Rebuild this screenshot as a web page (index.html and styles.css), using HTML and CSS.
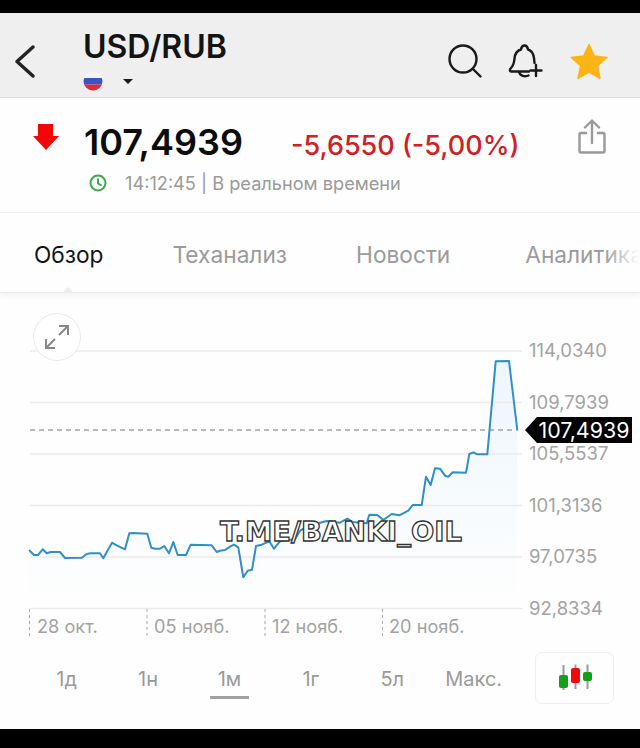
FILE: index.html
```html
<!DOCTYPE html>
<html>
<head>
	<title>USD/RUB</title>
	<link rel="stylesheet" href="styles.css">
</head>
<body>
	<div class="phone-bar top"></div>

	<header class="header">
		<svg class="back" width="20" height="34" viewBox="0 0 20 34"><path d="M18 2 L2 16.500 L18 31" /></svg>
		<div class="pair">
			<div class="pair-name">USD/RUB</div>
			<div class="pair-flag">
				<svg width="20" height="20" viewBox="0 0 20 20">
					<clipPath id="flagclip"><circle cx="10" cy="10" r="9.500" /></clipPath>
					<g clip-path="url(#flagclip)">
						<rect width="20" height="7" fill="#f4f4f6" />
						<rect y="7" width="20" height="6.500" fill="#3a56c4" />
						<rect y="13.500" width="20" height="6.500" fill="#dd2b3a" />
					</g>
				</svg>
				<span class="caret"></span>
			</div>
		</div>
		<div class="header-icons">
			<svg class="icon-search" width="36" height="36" viewBox="0 0 36 36"><circle cx="15" cy="15" r="13.500" /><path d="M25 25 L32.500 32.500" /></svg>
			<svg class="icon-bell" width="36" height="36" viewBox="0 0 36 36"><path d="M21 27.500 C14 27.500 8 27.500 3 27.500 C1.500 27 1.500 25.500 3 24 C6 21 6 19 6.500 14.500 C7 9.500 9.500 6.500 13 5.500 C13.500 2.500 15 1.500 16.500 1.500 C18 1.500 19.500 2.500 20 5.500 C23.500 6.500 25.500 9.500 26 14 L26.500 19" /><path d="M11 28 C12 32 17 33 20.500 31.500" /><path d="M28 21 V32 M22.500 26.500 H33.500" /></svg>
			<svg class="icon-star" width="38" height="38" viewBox="0 0 38 38"><path class="star" d="M19 1.500 L24.300 13 L36.800 14.400 L27.500 22.800 L30 35.300 L19 29 L8 35.300 L10.500 22.800 L1.200 14.400 L13.700 13 Z" /></svg>
		</div>
	</header>

	<section class="quote">
		<svg class="down-arrow" width="26" height="26" viewBox="0 0 26 26"><path d="M5 0 H20 V12 H26 L13 26 L0 12 H5 Z" /></svg>
		<div class="quote-main">
			<div class="quote-prices">
				<span class="price">107,4939</span>
				<span class="change">-5,6550 (-5,00%)</span>
			</div>
			<div class="quote-time">
				<svg width="18" height="18" viewBox="0 0 18 18"><circle cx="9" cy="9" r="7.500" /><path d="M9 4.500 V9.500 L12.500 11.500" /></svg>
				<span>14:12:45 | В реальном времени</span>
			</div>
		</div>
		<svg class="share" width="30" height="36" viewBox="0 0 30 36"><path d="M15 24 V2 M8 8.500 L15 1.500 L22 8.500" /><path d="M9 14 H4 C3 14 2.500 14.500 2.500 15.500 V32 C2.500 33 3 33.500 4 33.500 H26 C27 33.500 27.500 33 27.500 32 V15.500 C27.500 14.500 27 14 26 14 H21" /></svg>
	</section>

	<nav class="tabs">
		<span class="tab active">Обзор</span>
		<span class="tab">Теханализ</span>
		<span class="tab">Новости</span>
		<span class="tab last">Аналитика</span>
		<span class="tab-pointer"></span>
	</nav>

	<section class="chart">
		<svg class="chart-svg" width="640" height="352" viewBox="0 293 640 352">
			<defs>
				<linearGradient id="area" x1="0" y1="0" x2="0" y2="1">
					<stop offset="0" stop-color="#edf6fc" />
					<stop offset="1" stop-color="#fefefe" />
				</linearGradient>
			</defs>
			<polygon fill="url(#area)" points="29,550 34,555 38,555 42.700,549.300 46.700,553.300 50.700,552 60,552 65,558 81.700,557.700 86.700,554 90.700,553.300 100,553.300 103.300,558.300 112,542.700 116.700,545.300 125,549.300 129.300,533.300 133.300,533 147.300,533.700 151.300,547.700 155,548.700 160,548.700 164.300,546 169,553.300 173.300,542 177.700,555 186,555 190.700,544.700 211.700,545.300 216.700,552 220,550.700 225,550 230,546.700 234,544.700 238.300,547.300 243.300,577.300 247.700,570.700 252,569.700 256,546 261.700,544.700 269.300,541.300 274,548.700 280,541.300 288.300,540 295,539.300 300,530.700 305,528 310,531 320,522.700 326.700,521 340,522.700 347.300,518.700 352.700,522 366.700,523.300 369.300,514.700 377.300,515 383.300,520 391.700,514 399.300,515.300 408.300,510.700 412.700,505 421.700,505 426,476.700 430.700,485 435,468.300 440,468.700 445,475.700 448.300,476.700 452.700,472.300 466,472.700 469.300,454 473.300,452.300 477.300,454.300 487.300,454.300 495.700,361.300 509,361 517.300,430 517.300,608 29,608" />
			<g class="grid">
				<line x1="30" y1="351" x2="522" y2="351" />
				<line x1="30" y1="402.500" x2="522" y2="402.500" />
				<line x1="30" y1="454" x2="522" y2="454" />
				<line x1="30" y1="505.500" x2="522" y2="505.500" />
				<line x1="30" y1="557" x2="522" y2="557" />
				<line x1="30" y1="608.500" x2="522" y2="608.500" />
			</g>
			<g class="ticks">
				<line x1="29.500" y1="609" x2="29.500" y2="637" />
				<line x1="147" y1="609" x2="147" y2="637" />
				<line x1="265" y1="609" x2="265" y2="637" />
				<line x1="382.500" y1="609" x2="382.500" y2="637" />
			</g>
			<line class="last-line" x1="30" y1="430" x2="518" y2="430" />
			<polyline class="price-line" points="29,550 34,555 38,555 42.700,549.300 46.700,553.300 50.700,552 60,552 65,558 81.700,557.700 86.700,554 90.700,553.300 100,553.300 103.300,558.300 112,542.700 116.700,545.300 125,549.300 129.300,533.300 133.300,533 147.300,533.700 151.300,547.700 155,548.700 160,548.700 164.300,546 169,553.300 173.300,542 177.700,555 186,555 190.700,544.700 211.700,545.300 216.700,552 220,550.700 225,550 230,546.700 234,544.700 238.300,547.300 243.300,577.300 247.700,570.700 252,569.700 256,546 261.700,544.700 269.300,541.300 274,548.700 280,541.300 288.300,540 295,539.300 300,530.700 305,528 310,531 320,522.700 326.700,521 340,522.700 347.300,518.700 352.700,522 366.700,523.300 369.300,514.700 377.300,515 383.300,520 391.700,514 399.300,515.300 408.300,510.700 412.700,505 421.700,505 426,476.700 430.700,485 435,468.300 440,468.700 445,475.700 448.300,476.700 452.700,472.300 466,472.700 469.300,454 473.300,452.300 477.300,454.300 487.300,454.300 495.700,361.300 509,361 517.300,430" />
			<g class="axis-y">
				<text x="529" y="357">114,0340</text>
				<text x="529" y="408.500">109,7939</text>
				<text x="529" y="460">105,5537</text>
				<text x="529" y="511.500">101,3136</text>
				<text x="529" y="563">97,0735</text>
				<text x="529" y="614.500">92,8334</text>
			</g>
			<g class="axis-x">
				<text x="37" y="632.500">28 окт.</text>
				<text x="154" y="632.500">05 нояб.</text>
				<text x="272" y="632.500">12 нояб.</text>
				<text x="389" y="632.500">20 нояб.</text>
			</g>
			<polygon class="tag" points="525,430 537,417 632,417 632,443 537,443" />
			<text class="tag-text" x="538.500" y="437.500">107,4939</text>
		</svg>

		<button class="expand">
			<svg width="26" height="26" viewBox="0 0 26 26"><path d="M15 2 H24 V11 M24 2 L15 11 M2 15 V24 H11 M2 24 L11 15" /></svg>
		</button>
		<div class="watermark">T.ME/BANKI_OIL</div>
	</section>

	<section class="ranges">
		<span class="range">1д</span>
		<span class="range">1н</span>
		<span class="range active">1м</span>
		<span class="range">1г</span>
		<span class="range">5л</span>
		<span class="range">Макс.</span>
		<div class="chart-type">
			<svg width="36" height="28" viewBox="0 0 36 28">
				<path class="wick" d="M6.500 1 V26 M18.500 0.500 V25 M30.500 0.500 V25" />
				<rect class="candle-up" x="2" y="11" width="9" height="13" rx="2" />
				<rect class="candle-down" x="14" y="4" width="9" height="15" rx="2" />
				<rect class="candle-up" x="26" y="8" width="9" height="9" rx="2" />
			</svg>
		</div>
	</section>

	<div class="phone-bar bottom"></div>
</body>
</html>
```

FILE: styles.css
```css
html, body {
	margin: 0;
	padding: 0;
}
body {
	width: 640px;
	height: 748px;
	overflow: hidden;
	background-color: #fefefe;
	font-family: Inter, "Liberation Sans", sans-serif;
}
svg {
	display: block;
}

.phone-bar {
	background-color: #000;
}
.phone-bar.top {
	height: 13px;
}
.phone-bar.bottom {
	height: 19px;
}

/* header */
.header {
	display: flex;
	height: 84px;
	background-color: #efefef;
	border-bottom: 1px solid #dcdcdc;
}
.back {
	margin: 32px 0 0 15px;
	fill: none;
	stroke: #222;
	stroke-width: 3.4;
	stroke-linecap: round;
	stroke-linejoin: round;
}
.pair {
	margin: 16px 0 0 48px;
}
.pair-name {
	font-size: 32px;
	line-height: 36px;
	font-weight: 600;
	color: #141414;
}
.pair-flag {
	display: flex;
	align-items: center;
	margin-top: 6px;
}
.caret {
	margin-left: 20px;
	border-left: 5.500px solid transparent;
	border-right: 5.500px solid transparent;
	border-top: 5.500px solid #1a1a1a;
}
.header-icons {
	display: flex;
	align-items: flex-start;
	margin-left: auto;
	margin-right: 32px;
	gap: 24px;
}
.icon-search, .icon-bell {
	margin-top: 31px;
	fill: none;
	stroke: #1a1a1a;
	stroke-width: 2.400;
	stroke-linecap: round;
	stroke-linejoin: round;
}
.icon-star {
	margin-top: 30px;
	margin-left: 2px;
}
.star {
	fill: #fbb416;
	stroke: #fbb416;
	stroke-width: 1.500;
	stroke-linejoin: round;
}

/* quote */
.quote {
	display: flex;
	height: 114px;
	border-bottom: 1px solid #f1f1f1;
}
.down-arrow {
	margin: 26px 0 0 33px;
	fill: #f40606;
}
.quote-main {
	margin-left: 25px;
}
.quote-prices {
	display: flex;
	align-items: baseline;
	margin-top: 23px;
}
.price {
	font-size: 36px;
	line-height: 42px;
	font-weight: 600;
	color: #0c0c0c;
}
.change {
	margin-left: 48px;
	font-size: 27px;
	font-weight: 500;
	color: #cf2026;
}
.quote-time {
	display: flex;
	align-items: center;
	margin: 9px 0 0 5px;
	font-size: 18.200px;
	color: #9a9a9a;
}
.quote-time svg {
	margin-right: 18px;
	fill: none;
	stroke: #3ea84a;
	stroke-width: 2;
}
.share {
	margin: 21px 33px 0 auto;
	fill: none;
	stroke: #999;
	stroke-width: 2.400;
	stroke-linecap: round;
	stroke-linejoin: round;
}

/* tabs */
.tabs {
	position: relative;
	display: flex;
	align-items: center;
	box-sizing: content-box;
	height: 75px;
	padding: 4px 0 0 34px;
	gap: 69px;
	overflow: hidden;
	white-space: nowrap;
	font-size: 22.700px;
	color: #9b9b9b;
	border-bottom: 1px solid #ececec;
	box-shadow: 0 3px 6px rgba(0,0,0,0.05);
}
.tabs::after {
	content: "";
	position: absolute;
	right: 0;
	top: 0;
	width: 36px;
	height: 100%;
	background: linear-gradient(to right, rgba(254,254,254,0), #fefefe);
}
.tab.active {
	color: #141414;
}
.tab.last {
	margin-left: 6px;
}
.tab-pointer {
	position: absolute;
	left: 62px;
	bottom: -1px;
	width: 12px;
	height: 6px;
	background-color: #ececec;
	clip-path: polygon(50% 0, 100% 100%, 0 100%);
}

/* chart */
.chart {
	position: relative;
	height: 352px;
}
.grid line {
	stroke: #ebebeb;
	stroke-width: 1.500;
}
.ticks line {
	stroke: #aaa;
	stroke-width: 1;
	stroke-dasharray: 3 3;
}
.last-line {
	stroke: #777;
	stroke-width: 1;
	stroke-dasharray: 5 4;
}
.price-line {
	fill: none;
	stroke: #2f8fc8;
	stroke-width: 2;
	stroke-linejoin: round;
}
.axis-y text {
	font-size: 18.500px;
	fill: #a3a3a3;
}
.axis-x text {
	font-size: 18.200px;
	fill: #a3a3a3;
}
.tag {
	fill: #000;
}
.tag-text {
	font-size: 21.400px;
	fill: #fff;
}
.expand {
	position: absolute;
	left: 33px;
	top: 20px;
	display: flex;
	align-items: center;
	justify-content: center;
	width: 48px;
	height: 48px;
	padding: 0;
	background-color: #fff;
	border: 1px solid #eaeaea;
	border-radius: 50%;
}
.expand svg {
	fill: none;
	stroke: #888;
	stroke-width: 2;
}
.watermark {
	position: absolute;
	left: 220px;
	top: 224px;
	font-family: "DejaVu Sans", sans-serif;
	font-size: 27.400px;
	font-weight: bold;
	line-height: 30px;
	color: #fff;
	-webkit-text-stroke: 1.300px #333;
}

/* range buttons */
.ranges {
	display: flex;
	align-items: flex-start;
	height: 84px;
	padding-left: 26px;
}
.range {
	width: 81.400px;
	box-sizing: border-box;
	padding-top: 22px;
	text-align: center;
	font-size: 20px;
	line-height: 24px;
	color: #9a9a9a;
}
.range.active {
	position: relative;
}
.range.active::after {
	content: "";
	position: absolute;
	left: 21px;
	top: 51px;
	width: 39px;
	height: 3px;
	background-color: #a0a0a0;
}
.chart-type {
	display: flex;
	align-items: center;
	justify-content: center;
	width: 77px;
	height: 50px;
	margin: 7px 0 0 21px;
	border: 1px solid #eeeeee;
	border-radius: 7px;
}
.wick {
	fill: none;
	stroke: #999;
	stroke-width: 2;
}
.candle-up {
	fill: #14a014;
}
.candle-down {
	fill: #f00a0a;
}
```
